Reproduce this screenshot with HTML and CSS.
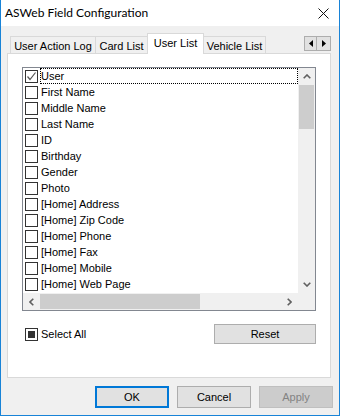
FILE: index.html
```html
<!DOCTYPE html>
<html>
<head>
<meta charset="utf-8">
<link rel="stylesheet" href="styles.css">
</head>
<body>
<div class="window">
  <div class="titlebar">
    <span class="title">ASWeb Field Configuration</span>
    <svg class="close" width="11" height="11" viewBox="0 0 11 11"><path d="M0.5 0.5L10.5 10.5M10.5 0.5L0.5 10.5" stroke="#111" stroke-width="1" fill="none"/></svg>
  </div>
  <div class="client">
    <div class="tabstrip">
      <div class="tab t1">User Action Log</div>
      <div class="tab t2">Card List</div>
      <div class="tab t3 selected">User List</div>
      <div class="tab t4">Vehicle List</div>
      <div class="tabscroll">
        <div class="tsbtn"><svg width="4" height="7" viewBox="0 0 4 7"><path d="M4 0L0 3.5L4 7Z" fill="#000"/></svg></div>
        <div class="tsbtn"><svg width="4" height="7" viewBox="0 0 4 7"><path d="M0 0L4 3.5L0 7Z" fill="#000"/></svg></div>
      </div>
    </div>
    <div class="panel">
      <div class="listbox">
        <div class="lb-main">
          <div class="lb-view">
            <div class="row"><span class="cb checked"><svg width="11" height="11" viewBox="0 0 11 11"><path d="M1.5 5.5L4 8.5L9.5 1.5" stroke="#555" stroke-width="1.2" fill="none"/></svg></span><span class="lbl focus">User</span></div>
            <div class="row"><span class="cb"></span><span class="lbl">First Name</span></div>
            <div class="row"><span class="cb"></span><span class="lbl">Middle Name</span></div>
            <div class="row"><span class="cb"></span><span class="lbl">Last Name</span></div>
            <div class="row"><span class="cb"></span><span class="lbl">ID</span></div>
            <div class="row"><span class="cb"></span><span class="lbl">Birthday</span></div>
            <div class="row"><span class="cb"></span><span class="lbl">Gender</span></div>
            <div class="row"><span class="cb"></span><span class="lbl">Photo</span></div>
            <div class="row"><span class="cb"></span><span class="lbl">[Home] Address</span></div>
            <div class="row"><span class="cb"></span><span class="lbl">[Home] Zip Code</span></div>
            <div class="row"><span class="cb"></span><span class="lbl">[Home] Phone</span></div>
            <div class="row"><span class="cb"></span><span class="lbl">[Home] Fax</span></div>
            <div class="row"><span class="cb"></span><span class="lbl">[Home] Mobile</span></div>
            <div class="row"><span class="cb"></span><span class="lbl">[Home] Web Page</span></div>
          </div>
          <div class="vscroll">
            <div class="sbtn"><svg width="8" height="5" viewBox="0 0 8 5"><path d="M0.7 4.3L4 1L7.3 4.3" stroke="#606060" stroke-width="1.6" fill="none"/></svg></div>
            <div class="vthumb"></div>
            <div class="vtrack"></div>
            <div class="sbtn"><svg width="8" height="5" viewBox="0 0 8 5"><path d="M0.7 0.7L4 4L7.3 0.7" stroke="#606060" stroke-width="1.6" fill="none"/></svg></div>
          </div>
        </div>
        <div class="lb-bottom">
          <div class="hscroll">
            <div class="sbtn"><svg width="5" height="8" viewBox="0 0 5 8"><path d="M4.3 0.7L1 4L4.3 7.3" stroke="#606060" stroke-width="1.6" fill="none"/></svg></div>
            <div class="hthumb"></div>
            <div class="htrack"></div>
            <div class="sbtn"><svg width="5" height="8" viewBox="0 0 5 8"><path d="M0.7 0.7L4 4L0.7 7.3" stroke="#606060" stroke-width="1.6" fill="none"/></svg></div>
          </div>
          <div class="corner"></div>
        </div>
      </div>
      <div class="panel-footer">
        <div class="selall"><span class="cb indet"><span class="sq"></span></span><span class="sel-lbl">Select All</span></div>
        <div class="btn reset">Reset</div>
      </div>
    </div>
    <div class="buttons">
      <div class="btn dlg default">OK</div>
      <div class="btn dlg">Cancel</div>
      <div class="btn dlg disabled">Apply</div>
    </div>
  </div>
</div>
</body>
</html>
```

FILE: styles.css
```css
* { box-sizing: border-box; }
html, body { margin: 0; padding: 0; }
body {
  width: 340px;
  height: 416px;
  overflow: hidden;
  background: #f0f0f0;
  font-family: "Liberation Sans", Arial, sans-serif;
  font-size: 11px;
  color: #000;
}
.window {
  width: 340px;
  height: 416px;
  display: flex;
  flex-direction: column;
  border-left: 1px solid #1883d7;
  border-right: 1px solid #1883d7;
  border-bottom: 1px solid #1883d7;
}
.titlebar {
  height: 26px;
  background: #fff;
  display: flex;
  align-items: center;
  justify-content: space-between;
  padding-left: 4px;
  padding-right: 10px;
}
.title {
  font-family: "Lato", "Segoe UI", sans-serif;
  font-size: 12px;
  color: #000;
  margin-top: -1px;
}
.client {
  flex: 1;
  display: flex;
  flex-direction: column;
  background: #f0f0f0;
}
.tabstrip {
  margin-top: 7px;
  height: 20px;
  display: flex;
  align-items: flex-end;
  padding-left: 9px;
  position: relative;
}
.tab {
  height: 17px;
  border: 1px solid #d9d9d9;
  border-bottom: none;
  background: #f0f0f0;
  display: flex;
  align-items: center;
  justify-content: center;
  white-space: nowrap;
  padding-top: 1px;
}
.t1 { width: 86px; }
.t2 { width: 53px; margin-left: -1px; }
.t3 { width: 57px; margin-left: -1px; }
.t4 { width: 63px; margin-left: -1px; }
.tab.selected {
  height: 21px;
  margin-bottom: -1px;
  background: #fff;
  position: relative;
  z-index: 2;
  padding-top: 0;
  padding-bottom: 3px;
}
.tabscroll {
  margin-left: auto;
  margin-right: 8px;
  align-self: flex-start;
  margin-top: 3px;
  display: flex;
}
.tsbtn {
  width: 13px;
  height: 15px;
  border: 1px solid #adadad;
  background: #e1e1e1;
  display: flex;
  align-items: center;
  justify-content: center;
}
.tsbtn + .tsbtn { margin-left: -1px; width: 15px; }
.panel {
  height: 325px;
  margin-left: 6px;
  margin-right: 8px;
  background: #fff;
  border: 1px solid #d9d9d9;
  padding: 13px 14px 0 14px;
  display: flex;
  flex-direction: column;
}
.listbox {
  height: 244px;
  border: 1px solid #828790;
  display: flex;
  flex-direction: column;
}
.lb-main {
  height: 225px;
  display: flex;
}
.lb-view {
  flex: 1;
  display: flex;
  flex-direction: column;
}
.row {
  height: 16px;
  display: flex;
  align-items: center;
  padding-left: 2px;
}
.cb {
  width: 13px;
  height: 13px;
  border: 1px solid #333;
  background: #fff;
  display: flex;
  align-items: center;
  justify-content: center;
  flex: none;
}
.lbl {
  flex: 1;
  height: 16px;
  margin-left: 2px;
  border: 1px dotted transparent;
  display: flex;
  align-items: center;
  white-space: nowrap;
}
.lbl.focus { border-color: #000; }
.vscroll {
  width: 17px;
  background: #f0f0f0;
  display: flex;
  flex-direction: column;
}
.sbtn {
  width: 17px;
  height: 17px;
  display: flex;
  align-items: center;
  justify-content: center;
  flex: none;
}
.vthumb {
  height: 44px;
  margin: 0 1px;
  background: #cdcdcd;
}
.vtrack { flex: 1; }
.lb-bottom {
  height: 17px;
  display: flex;
}
.hscroll {
  flex: 1;
  display: flex;
  background: #f0f0f0;
}
.hthumb {
  width: 160px;
  margin: 1px 0;
  background: #cdcdcd;
}
.htrack { flex: 1; }
.corner {
  width: 17px;
  background: #f0f0f0;
}
.panel-footer {
  margin-top: 13px;
  display: flex;
  align-items: center;
  justify-content: space-between;
  padding-left: 3px;
}
.selall {
  display: flex;
  align-items: center;
}
.cb.indet .sq {
  width: 7px;
  height: 7px;
  background: #333;
}
.sel-lbl { margin-left: 3px; }
.btn {
  height: 20px;
  border: 1px solid #adadad;
  background: #e1e1e1;
  display: flex;
  align-items: center;
  justify-content: center;
}
.reset { width: 102px; margin-right: 0px; }
.buttons {
  margin-top: 8px;
  display: flex;
  justify-content: flex-end;
  gap: 8px;
  padding-right: 6px;
}
.btn.dlg {
  width: 74px;
  height: 22px;
}
.btn.default {
  border: 2px solid #0078d7;
}
.btn.disabled {
  background: #cccccc;
  border-color: #bfbfbf;
  color: #838383;
}
```
